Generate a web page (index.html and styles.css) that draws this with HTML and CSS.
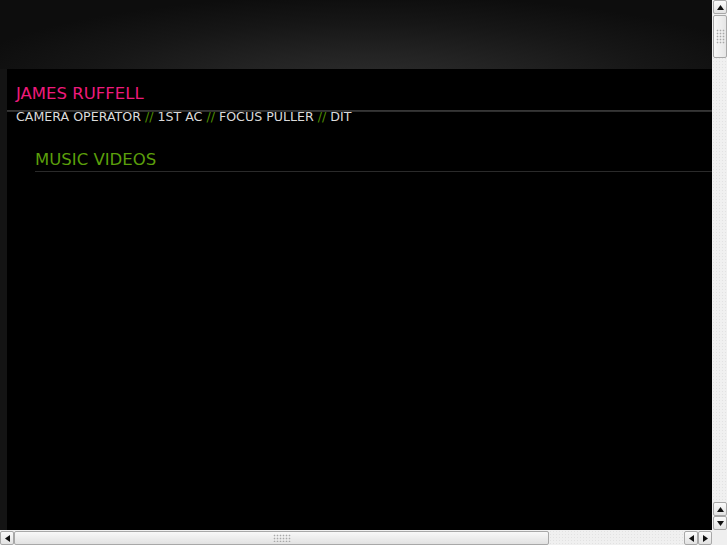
FILE: index.html
```html
<!DOCTYPE html>
<html lang="en">
<head>
<meta charset="utf-8">
<title>James Ruffell</title>
<link rel="stylesheet" href="styles.css">
</head>
<body>
<div class="screen">
  <div class="viewport">
    <div class="band"></div>
    <div class="container">
      <h1 class="name">JAMES RUFFELL</h1>
      <div class="rule"></div>
      <p class="roles">CAMERA OPERATOR <span class="sep">//</span> 1ST AC <span class="sep">//</span> FOCUS PULLER <span class="sep">//</span> DIT</p>
      <section class="section">
        <h2 class="section-title">MUSIC VIDEOS</h2>
      </section>
    </div>
  </div>
  <div class="vscroll">
    <div class="btn vbtn"><svg width="7" height="5" viewBox="0 0 7 5"><path d="M3.5 0 L7 5 L0 5 Z" fill="#111"/></svg></div>
    <div class="thumb vthumb"><div class="grip vgrip"></div></div>
    <div class="track"></div>
    <div class="btn vbtn"><svg width="7" height="5" viewBox="0 0 7 5"><path d="M3.5 0 L7 5 L0 5 Z" fill="#111"/></svg></div>
    <div class="btn vbtn"><svg width="7" height="5" viewBox="0 0 7 5"><path d="M0 0 L7 0 L3.5 5 Z" fill="#111"/></svg></div>
  </div>
  <div class="hscroll">
    <div class="btn hbtn"><svg width="5" height="7" viewBox="0 0 5 7"><path d="M0 3.5 L5 0 L5 7 Z" fill="#111"/></svg></div>
    <div class="thumb hthumb"><div class="grip hgrip"></div></div>
    <div class="track"></div>
    <div class="btn hbtn"><svg width="5" height="7" viewBox="0 0 5 7"><path d="M0 3.5 L5 0 L5 7 Z" fill="#111"/></svg></div>
    <div class="btn hbtn"><svg width="5" height="7" viewBox="0 0 5 7"><path d="M5 3.5 L0 0 L0 7 Z" fill="#111"/></svg></div>
  </div>
  <div class="corner"></div>
</div>
</body>
</html>
```

FILE: styles.css
```css
html, body {
  margin: 0;
  padding: 0;
  height: 100%;
}
body {
  background: #efefef;
  font-family: "DejaVu Sans", "Liberation Sans", sans-serif;
}
.screen {
  display: grid;
  grid-template-columns: 712px 15px;
  grid-template-rows: 530px 15px;
  width: 727px;
  height: 545px;
  overflow: hidden;
}
.viewport {
  overflow: hidden;
  background: #141414;
  display: flex;
  flex-direction: column;
}
.band {
  flex: none;
  height: 69px;
  background:
    radial-gradient(ellipse 420px 90px at 370px 85px, #2e2e2e 0%, #232323 35%, #161616 70%, #0d0d0d 100%);
}
.container {
  flex: 1;
  width: 800px;
  margin-left: 7px;
  background: #000;
  padding-top: 15px;
}
.name {
  margin: 0 0 0 9px;
  font-size: 16.5px;
  font-weight: normal;
  line-height: 20px;
  color: #ee1a7b;
}
.rule {
  height: 2px;
  margin-top: 6px;
  background: linear-gradient(#3a3a3a, #2a2a2a);
}
.roles {
  margin: -1px 0 0 9px;
  font-size: 12.62px;
  line-height: 12px;
  color: #dadada;
}
.sep {
  color: #4e8f00;
}
.section {
  margin: 27px 0 0 28px;
}
.section-title {
  margin: 0;
  padding-bottom: 1px;
  font-size: 16.5px;
  font-weight: normal;
  line-height: 20px;
  color: #5b9f0b;
  border-bottom: 1px solid #2a2a2a;
}

/* scrollbars */
.vscroll, .hscroll {
  display: flex;
  background-color: #f0f0f0;
  background-image: radial-gradient(circle, #e2e2e2 0.6px, transparent 0.9px);
  background-size: 3px 3px;
}
.vscroll {
  flex-direction: column;
}
.hscroll {
  flex-direction: row;
}
.corner {
  background: #efefef;
}
.btn {
  box-sizing: border-box;
  flex: none;
  display: flex;
  align-items: center;
  justify-content: center;
  border: 1px solid #a8a8a8;
  border-radius: 2px;
  background: linear-gradient(#fbfbfb, #e2e2e2);
}
.vbtn {
  width: 14px;
  height: 14px;
  margin-left: 1px;
}
.hbtn {
  width: 14px;
  height: 14px;
  margin-top: 1px;
}
.thumb {
  box-sizing: border-box;
  flex: none;
  display: flex;
  align-items: center;
  justify-content: center;
  border: 1px solid #a8a8a8;
  border-radius: 2px;
  background: linear-gradient(90deg, #f8f8f8, #e6e6e6);
}
.vthumb {
  height: 43px;
  width: 14px;
  margin: 1px 0 0 1px;
}
.hthumb {
  width: 535px;
  height: 14px;
  margin-top: 1px;
  background: linear-gradient(#f8f8f8, #e2e2e2);
}
.track {
  flex: 1;
}
.grip {
  background-image: radial-gradient(circle, #a8a8a8 0.7px, transparent 1.1px);
  background-size: 3px 3px;
}
.vgrip {
  width: 9px;
  height: 15px;
}
.hgrip {
  width: 18px;
  height: 8px;
}
```
